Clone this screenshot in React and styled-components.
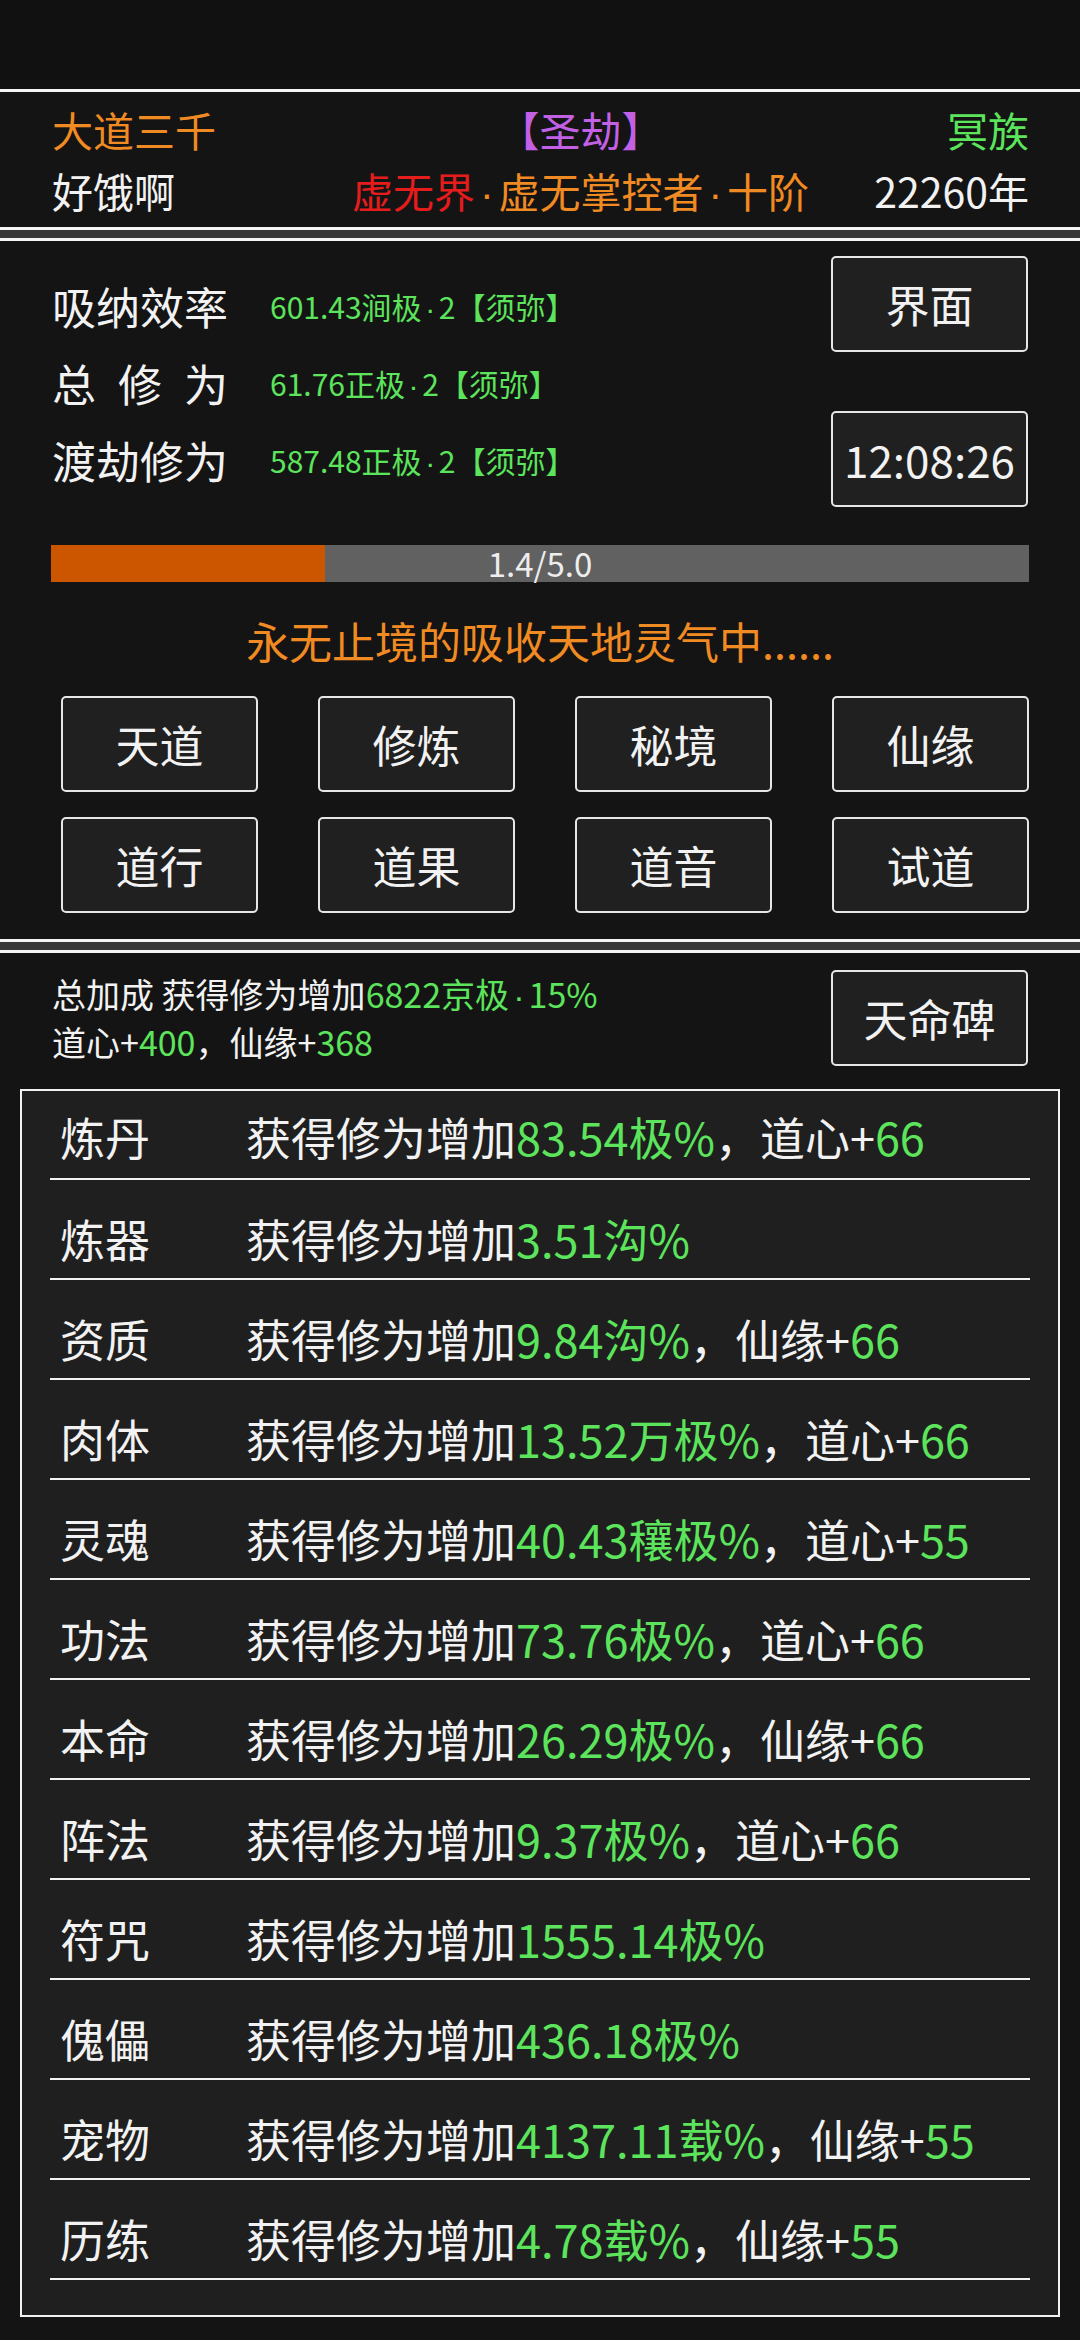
import React from "react";
import styled, { createGlobalStyle } from "styled-components";

const GlobalStyle = createGlobalStyle`
  html, body {
    margin: 0;
    padding: 0;
    background: #383838;
  }
  body {
    font-family: "Noto Sans CJK SC", "Noto Sans", sans-serif;
    color: #f2f2f2;
  }
`;

const colors = {
  white: "#f2f2f2",
  orange: "#f08a22",
  green: "#5ce45c",
  red: "#e41c1c",
  purple: "#c261e6",
};

const Page = styled.div`
  width: 1080px;
  height: 2340px;
  overflow: hidden;
  display: flex;
  flex-direction: column;
  background: #383838;
`;

const StatusBar = styled.div`
  height: 89px;
  background: #111111;
  flex-shrink: 0;
`;

const Panel = styled.section`
  background: #141414;
  border-top: 3px solid #f5f5f5;
  border-bottom: 3px solid #f5f5f5;
  margin-top: ${(p) => (p.$first ? 0 : 8)}px;
  flex-shrink: 0;
  ${(p) => p.$grow && "flex: 1; border-bottom: none;"}
`;

// narrow middle dot, the CJK font draws it full width
const Dot = styled.span`
  font-family: "Liberation Sans", sans-serif;
  margin: 0 0.12em;
  line-height: 1;
`;

/* header */
const HeaderGrid = styled.div`
  display: grid;
  grid-template-columns: 294px minmax(0, 1fr) 214px;
  grid-auto-rows: 61px;
  padding: 7px 51px 6px 52px;
  font-size: 41px;
  line-height: 61px;
  white-space: nowrap;
`;

const Cell = styled.div`
  height: 61px;
  color: ${(p) => p.$color || colors.white};
  text-align: ${(p) => p.$align || "left"};
`;

const Tint = styled.span`
  color: ${(p) => colors[p.$c] || colors.white};
`;

/* status panel */
const TopRow = styled.div`
  display: flex;
  justify-content: space-between;
  padding: 15px 52px 0 52px;
`;

const Stats = styled.div`
  padding-top: 11px;
  display: flex;
  flex-direction: column;
`;

const StatRow = styled.div`
  display: flex;
  align-items: center;
  height: 77px;
`;

const StatLabel = styled.div`
  width: 176px;
  font-size: 44px;
  color: ${colors.white};
  text-align-last: justify;
  white-space: nowrap;
`;

const StatValue = styled.div`
  margin-left: 42px;
  font-size: 30px;
  color: ${colors.green};
  white-space: nowrap;
`;

const SideButtons = styled.div`
  display: flex;
  flex-direction: column;
  gap: 59px;
`;

const Button = styled.div`
  box-sizing: border-box;
  width: 197px;
  height: 96px;
  display: flex;
  align-items: center;
  justify-content: center;
  background: #202020;
  border: 2px solid #e6e6e6;
  border-radius: 5px;
  font-size: 44px;
  color: ${colors.white};
  white-space: nowrap;
`;

const Progress = styled.div`
  position: relative;
  margin: 38px 51px 0 51px;
  height: 37px;
  background: #616161;
`;

const ProgressFill = styled.div`
  height: 100%;
  background: #cc5500;
`;

const ProgressText = styled.div`
  position: absolute;
  inset: 0;
  text-align: center;
  font-size: 33px;
  line-height: 37px;
  color: #ededed;
`;

const Message = styled.div`
  margin-top: 29px;
  text-align: center;
  font-size: 43px;
  line-height: 58px;
  height: 58px;
  color: ${colors.orange};
`;

const NavGrid = styled.div`
  display: grid;
  grid-template-columns: repeat(4, 196px);
  column-gap: 61px;
  row-gap: 25px;
  padding: 27px 52px 26px 61px;
`;

/* bonus panel */
const BonusRow = styled.div`
  display: flex;
  justify-content: space-between;
  align-items: center;
  padding: 17px 52px 0 52px;
`;

const BonusText = styled.div`
  font-size: 34px;
  line-height: 48px;
  color: ${colors.white};
  white-space: nowrap;
`;

const BonusLine = styled.div`
  height: 48px;
`;

const ListBox = styled.div`
  margin: 23px 20px 22px 20px;
  background: #1f1f1f;
  border: 2px solid #f2f2f2;
  padding: 0 28px 35px 28px;
`;

const ListRow = styled.div`
  display: flex;
  padding: 37px 0 17px 10px;
  border-bottom: 2px solid #f2f2f2;
  font-size: 45px;
  line-height: 44px;
  white-space: nowrap;
  &:first-child {
    padding-top: 24px;
    padding-bottom: 19px;
  }
`;

const RowLabel = styled.div`
  width: 186px;
  flex-shrink: 0;
  color: ${colors.white};
`;

const RowText = styled.div`
  color: ${colors.white};
`;

const stats = [
  { label: "吸纳效率", num: "601.43涧极", tail: "2【须弥】" },
  { label: "总 修 为", num: "61.76正极", tail: "2【须弥】" },
  { label: "渡劫修为", num: "587.48正极", tail: "2【须弥】" },
];

const navs = ["天道", "修炼", "秘境", "仙缘", "道行", "道果", "道音", "试道"];

const bonuses = [
  { name: "炼丹", value: "83.54极%", extra: ["道心", "66"] },
  { name: "炼器", value: "3.51沟%" },
  { name: "资质", value: "9.84沟%", extra: ["仙缘", "66"] },
  { name: "肉体", value: "13.52万极%", extra: ["道心", "66"] },
  { name: "灵魂", value: "40.43穰极%", extra: ["道心", "55"] },
  { name: "功法", value: "73.76极%", extra: ["道心", "66"] },
  { name: "本命", value: "26.29极%", extra: ["仙缘", "66"] },
  { name: "阵法", value: "9.37极%", extra: ["道心", "66"] },
  { name: "符咒", value: "1555.14极%" },
  { name: "傀儡", value: "436.18极%" },
  { name: "宠物", value: "4137.11载%", extra: ["仙缘", "55"] },
  { name: "历练", value: "4.78载%", extra: ["仙缘", "55"] },
];

export default function App() {
  const progress = 1.4 / 5.0;
  return (
    <Page>
      <GlobalStyle />
      <StatusBar />

      <Panel $first>
        <HeaderGrid>
          <Cell $color={colors.orange}>大道三千</Cell>
          <Cell $color={colors.purple} $align="center">【圣劫】</Cell>
          <Cell $color={colors.green} $align="right">冥族</Cell>
          <Cell>好饿啊</Cell>
          <Cell $align="center">
            <Tint $c="red">虚无界</Tint>
            <Tint $c="orange">
              <Dot>·</Dot>虚无掌控者<Dot>·</Dot>十阶
            </Tint>
          </Cell>
          <Cell $align="right">22260年</Cell>
        </HeaderGrid>
      </Panel>

      <Panel>
        <TopRow>
          <Stats>
            {stats.map((s) => (
              <StatRow key={s.label}>
                <StatLabel>{s.label}</StatLabel>
                <StatValue>
                  {s.num}
                  <Dot>·</Dot>
                  {s.tail}
                </StatValue>
              </StatRow>
            ))}
          </Stats>
          <SideButtons>
            <Button>界面</Button>
            <Button>12:08:26</Button>
          </SideButtons>
        </TopRow>
        <Progress>
          <ProgressFill style={{ width: `${progress * 100}%` }} />
          <ProgressText>1.4/5.0</ProgressText>
        </Progress>
        <Message>永无止境的吸收天地灵气中......</Message>
        <NavGrid>
          {navs.map((n) => (
            <Button key={n}>{n}</Button>
          ))}
        </NavGrid>
      </Panel>

      <Panel $grow>
        <BonusRow>
          <BonusText>
            <BonusLine>
              总加成 获得修为增加
              <Tint $c="green">
                6822京极<Dot>·</Dot>15%
              </Tint>
            </BonusLine>
            <BonusLine>
              道心+<Tint $c="green">400</Tint>，仙缘+<Tint $c="green">368</Tint>
            </BonusLine>
          </BonusText>
          <Button>天命碑</Button>
        </BonusRow>
        <ListBox>
          {bonuses.map((b) => (
            <ListRow key={b.name}>
              <RowLabel>{b.name}</RowLabel>
              <RowText>
                获得修为增加<Tint $c="green">{b.value}</Tint>
                {b.extra && (
                  <>
                    ，{b.extra[0]}+<Tint $c="green">{b.extra[1]}</Tint>
                  </>
                )}
              </RowText>
            </ListRow>
          ))}
        </ListBox>
      </Panel>
    </Page>
  );
}
